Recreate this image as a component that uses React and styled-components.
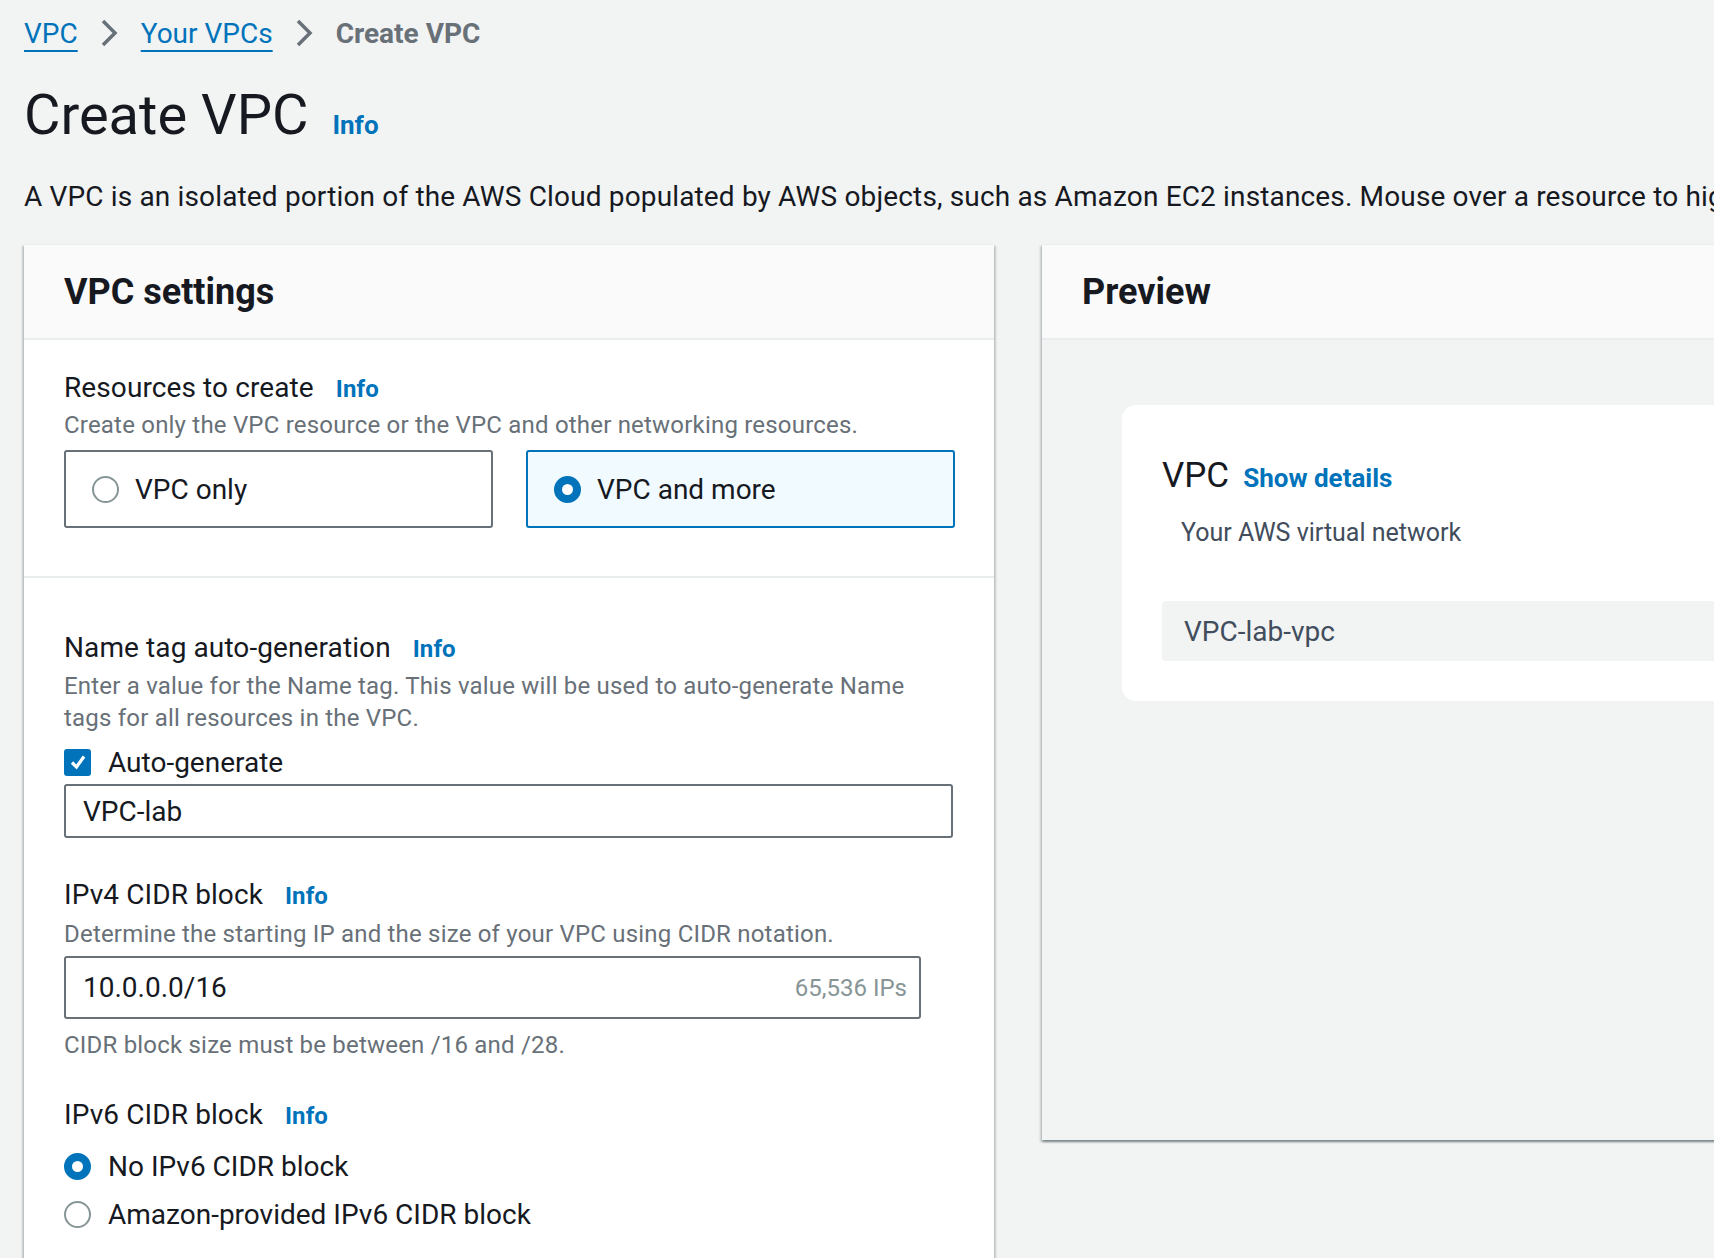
import styled, { createGlobalStyle } from "styled-components";

const GlobalStyle = createGlobalStyle`
  html, body {
    margin: 0;
    padding: 0;
    background: #f2f3f3;
    overflow: hidden;
  }
  body {
    font-family: Roboto, "Liberation Sans", Arial, sans-serif;
    color: #16191f;
  }
  * { box-sizing: border-box; }
`;

const Page = styled.div`
  width: 100vw;
  height: 100vh;
  overflow: hidden;
  padding: 13px 0 0 24px;
`;

const Breadcrumbs = styled.nav`
  display: flex;
  align-items: center;
  height: 40px;
  font-size: 28px;
  gap: 22px;
`;

const Crumb = styled.a`
  color: #0073bb;
  text-decoration: underline;
  text-decoration-thickness: 2px;
  text-underline-offset: 7px;
  cursor: pointer;
`;

const Current = styled.span`
  color: #687078;
  font-weight: 700;
`;

const Chevron = () => (
  <svg width="19" height="30" viewBox="0 0 19 30" fill="none">
    <path d="M3 3 L15 15 L3 27" stroke="#687078" strokeWidth="3.5" />
  </svg>
);

const TitleRow = styled.div`
  display: flex;
  align-items: baseline;
  gap: 24px;
  margin-top: 30px;
`;

const H1 = styled.h1`
  margin: 0;
  font-size: 56px;
  line-height: 64px;
  font-weight: 400;
`;

const Info = styled.a`
  color: #0073bb;
  font-weight: 700;
  font-size: ${(p) => (p.$large ? "26px" : "24px")};
  cursor: pointer;
`;

const Lead = styled.p`
  margin: 30px 0 0;
  font-size: 28px;
  line-height: 40px;
  letter-spacing: 0.15px;
  white-space: nowrap;
`;

const Columns = styled.div`
  display: grid;
  grid-template-columns: 970px 900px;
  gap: 48px;
  align-items: start;
  margin-top: 27px;
`;

const Panel = styled.section`
  background: #fff;
  border-top: 1px solid #eaeded;
  box-shadow: 0 2px 2px 0 rgba(0, 28, 36, 0.3),
    2px 2px 2px 0 rgba(0, 28, 36, 0.15), -2px 2px 2px 0 rgba(0, 28, 36, 0.15);
  padding-bottom: 200px;
`;

const PreviewPanel = styled(Panel)`
  background: #f2f3f3;
  height: 896px;
  padding-bottom: 0;
`;

const PanelHeader = styled.header`
  height: 95px;
  display: flex;
  align-items: center;
  padding: 0 40px;
  background: #fafafa;
  border-bottom: 2px solid #eaeded;
`;

const H2 = styled.h2`
  margin: 0;
  font-size: 36px;
  line-height: 44px;
  font-weight: 700;
`;

const Section = styled.div`
  padding: ${(p) => (p.$first ? "28px 40px 48px" : "50px 40px 0")};
  border-bottom: ${(p) => (p.$first ? "2px solid #eaeded" : "none")};
`;

const Field = styled.div`
  margin-top: ${(p) => p.$gap || 0}px;
`;

const Label = styled.div`
  display: flex;
  align-items: baseline;
  gap: 22px;
  font-size: 28px;
  line-height: 40px;
  letter-spacing: 0.1px;
`;

const Description = styled.div`
  max-width: 880px;
  color: #687078;
  font-size: 24px;
  line-height: 32px;
  letter-spacing: 0.2px;
  margin-top: ${(p) => p.$gap || 0}px;
`;

const Tiles = styled.div`
  display: grid;
  grid-template-columns: 429px 429px;
  gap: 33px;
  margin-top: 9px;
`;

const Tile = styled.div`
  height: 78px;
  display: flex;
  align-items: center;
  gap: 16px;
  padding: 0 26px;
  border: 2px solid ${(p) => (p.$selected ? "#0073bb" : "#687078")};
  background: ${(p) => (p.$selected ? "#f1faff" : "#fff")};
  border-radius: 3px;
  font-size: 28px;
`;

const Radio = styled.span`
  flex: none;
  width: 27px;
  height: 27px;
  border-radius: 50%;
  background: #fff;
  border: ${(p) => (p.$checked ? "8px solid #0073bb" : "2px solid #879596")};
`;

const OptionRow = styled.div`
  display: flex;
  align-items: center;
  gap: 17px;
  height: 40px;
  font-size: 28px;
  margin-top: ${(p) => p.$gap || 0}px;
`;

const Checkbox = styled.span`
  flex: none;
  width: 27px;
  height: 27px;
  border-radius: 3px;
  background: #0073bb;
  display: flex;
  align-items: center;
  justify-content: center;
`;

const Input = styled.div`
  display: flex;
  align-items: center;
  justify-content: space-between;
  width: ${(p) => p.$width}px;
  height: ${(p) => p.$height}px;
  margin-top: ${(p) => p.$gap || 0}px;
  padding: 0 12px 0 17px;
  border: 2px solid #687078;
  border-radius: 3px;
  background: #fff;
  font-size: 28px;
`;

const Hint = styled.span`
  color: #879596;
  font-size: 24px;
`;

const PreviewBody = styled.div`
  padding: 65px 0 0 80px;
`;

const Card = styled.div`
  width: 900px;
  background: #fff;
  border-radius: 14px;
  padding: 49px 40px 40px;
`;

const CardTitle = styled.div`
  display: flex;
  align-items: baseline;
  gap: 14px;
  font-size: 35px;
  line-height: 44px;
`;

const CardLink = styled.a`
  color: #0073bb;
  font-weight: 700;
  font-size: 26px;
  cursor: pointer;
`;

const CardText = styled.div`
  margin: 13px 0 0 19px;
  color: #414d5c;
  font-size: 25px;
  line-height: 40px;
`;

const NameBox = styled.div`
  margin-top: 48px;
  height: 60px;
  display: flex;
  align-items: center;
  padding: 0 22px;
  background: #f2f3f3;
  border-radius: 4px;
  color: #414d5c;
  font-size: 28px;
`;

export default function App() {
  return (
    <Page>
      <GlobalStyle />
      <Breadcrumbs>
        <Crumb>VPC</Crumb>
        <Chevron />
        <Crumb>Your VPCs</Crumb>
        <Chevron />
        <Current>Create VPC</Current>
      </Breadcrumbs>
      <TitleRow>
        <H1>Create VPC</H1>
        <Info $large>Info</Info>
      </TitleRow>
      <Lead>
        A VPC is an isolated portion of the AWS Cloud populated by AWS objects,
        such as Amazon EC2 instances. Mouse over a resource to highlight the
        related resources.
      </Lead>
      <Columns>
        <Panel>
          <PanelHeader>
            <H2>VPC settings</H2>
          </PanelHeader>
          <Section $first>
            <Label>
              Resources to create <Info>Info</Info>
            </Label>
            <Description>
              Create only the VPC resource or the VPC and other networking
              resources.
            </Description>
            <Tiles>
              <Tile>
                <Radio />
                VPC only
              </Tile>
              <Tile $selected>
                <Radio $checked />
                VPC and more
              </Tile>
            </Tiles>
          </Section>
          <Section>
            <Field>
              <Label>
                Name tag auto-generation <Info>Info</Info>
              </Label>
              <Description $gap={1}>
                Enter a value for the Name tag. This value will be used to
                auto-generate Name tags for all resources in the VPC.
              </Description>
              <OptionRow $gap={8}>
                <Checkbox>
                  <svg width="18" height="18" viewBox="0 0 18 18" fill="none">
                    <path
                      d="M3 9.5 L7.5 14 L15 3.5"
                      stroke="#fff"
                      strokeWidth="3.2"
                    />
                  </svg>
                </Checkbox>
                Auto-generate
              </OptionRow>
              <Input $width={889} $height={54} $gap={2}>
                VPC-lab
              </Input>
            </Field>
            <Field $gap={37}>
              <Label>
                IPv4 CIDR block <Info>Info</Info>
              </Label>
              <Description $gap={2}>
                Determine the starting IP and the size of your VPC using CIDR
                notation.
              </Description>
              <Input $width={857} $height={63} $gap={6}>
                10.0.0.0/16
                <Hint>65,536 IPs</Hint>
              </Input>
              <Description $gap={10}>
                CIDR block size must be between /16 and /28.
              </Description>
            </Field>
            <Field $gap={34}>
              <Label>
                IPv6 CIDR block <Info>Info</Info>
              </Label>
              <OptionRow $gap={10}>
                <Radio $checked />
                No IPv6 CIDR block
              </OptionRow>
              <OptionRow $gap={8}>
                <Radio />
                Amazon-provided IPv6 CIDR block
              </OptionRow>
            </Field>
          </Section>
        </Panel>
        <PreviewPanel>
          <PanelHeader>
            <H2>Preview</H2>
          </PanelHeader>
          <PreviewBody>
            <Card>
              <CardTitle>
                VPC <CardLink>Show details</CardLink>
              </CardTitle>
              <CardText>Your AWS virtual network</CardText>
              <NameBox>VPC-lab-vpc</NameBox>
            </Card>
          </PreviewBody>
        </PreviewPanel>
      </Columns>
    </Page>
  );
}
